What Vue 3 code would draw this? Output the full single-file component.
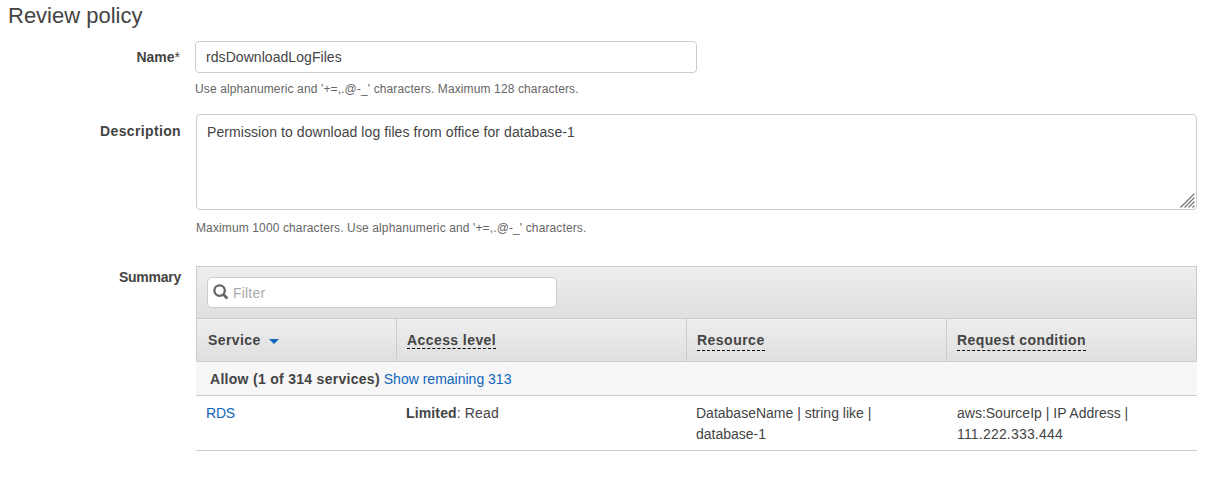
<script setup>
const columns = [
  { title: 'Service', sorted: true, cls: 'service' },
  { title: 'Access level', cls: 'hint access' },
  { title: 'Resource', cls: 'hint loose resource' },
  { title: 'Request condition', cls: 'hint loose condition' },
]
</script>

<template>
  <main class="page">
    <h1>Review policy</h1>

    <section class="field name-field">
      <label class="label">Name<span class="required">*</span></label>
      <div class="control">
        <div class="text-input">rdsDownloadLogFiles</div>
        <p class="help">Use alphanumeric and '+=,.@-_' characters. Maximum 128 characters.</p>
      </div>
    </section>

    <section class="field description-field">
      <label class="label">Description</label>
      <div class="control">
        <div class="textarea">
          Permission to download log files from office for database-1
          <svg class="grip" width="15" height="15" viewBox="0 0 15 15">
            <path d="M0.5 14.5L14.5 0.5M4.5 14.5L14.5 4.5M8.5 14.5L14.5 8.5M12.5 14.5L14.5 12.5" />
          </svg>
        </div>
        <p class="help">Maximum 1000 characters. Use alphanumeric and '+=,.@-_' characters.</p>
      </div>
    </section>

    <section class="field summary-field">
      <label class="label">Summary</label>
      <div class="control table">
        <div class="toolbar">
          <div class="filter">
            <svg width="16" height="16" viewBox="0 0 16 16">
              <circle cx="6.6" cy="6.6" r="5.2" />
              <path d="M10.4 10.4L14.4 14.4" />
            </svg>
            <span>Filter</span>
          </div>
        </div>
        <div class="row head">
          <div v-for="c in columns" :key="c.title" class="th">
            <span :class="c.cls">{{ c.title }}</span>
            <svg v-if="c.sorted" class="caret" width="10" height="5" viewBox="0 0 10 5"><path d="M0 0H10L5 5Z" /></svg>
          </div>
        </div>
        <div class="group"><b>Allow (1 of 314 services)</b> <a>Show remaining 313</a></div>
        <div class="row body">
          <div class="td"><a class="rds">RDS</a></div>
          <div class="td limited"><b>Limited</b>: Read</div>
          <div class="td">DatabaseName | string like |<br />database-1</div>
          <div class="td last">aws:SourceIp | IP Address |<br /><span class="ip">111.222.333.444</span></div>
        </div>
      </div>
    </section>
  </main>
</template>

<style>
body { background: #fff; }
</style>

<style scoped>
.page {
  box-sizing: border-box;
  width: 1225px;
  height: 480px;
  overflow: hidden;
  padding: 3px 28px 0 0;
  font: 14px/21px "Liberation Sans", Arial, sans-serif;
  color: #444;
}
h1 { margin: 0 0 0 8px; font-size: 22px; line-height: 26px; font-weight: 400; }
.field { display: flex; }
.label { width: 181px; flex: none; text-align: right; font-weight: 700; }
.required { font-weight: 400; }
.control { flex: 1; min-width: 0; margin-left: 15px; }
.name-field { margin-top: 12px; height: 73px; }
.name-field .label { width: 180px; padding-top: 6px; }
.text-input {
  box-sizing: border-box; width: 502px; height: 32px;
  border: 1px solid #ccc; border-radius: 4px; padding: 5px 10px;
  letter-spacing: 0.06px;
}
.help { margin: 0; padding-top: 8px; font-size: 12px; line-height: 16px; letter-spacing: 0.122px; color: #666; }
.description-field { height: 152px; }
.description-field .label { padding-top: 7px; letter-spacing: 0.36px; }
.textarea {
  box-sizing: border-box; position: relative; height: 96px;
  border: 1px solid #ccc; border-radius: 4px; padding: 7px 10px;
  letter-spacing: 0.08px;
}
.description-field .help { padding-top: 10px; }
.grip { position: absolute; right: 1px; bottom: 1px; stroke: #777; stroke-width: 1.3; fill: none; }
.summary-field .label { padding-top: 1px; letter-spacing: -0.25px; }
.toolbar {
  box-sizing: border-box; height: 52px; padding: 10px;
  border: 1px solid #ccc; border-bottom: 0;
  background: linear-gradient(#eee, #dfdfdf);
}
.filter {
  box-sizing: border-box; width: 350px; height: 31px; padding: 0 5px;
  display: flex; align-items: center; gap: 4px;
  border: 1px solid #ccc; border-radius: 5px; background: #fff; color: #aaa;
}
.filter span { padding-top: 1px; letter-spacing: 0.2px; }
.filter svg { fill: none; stroke: #666; stroke-width: 2.3; margin-top: -2px; }
.filter path { stroke-width: 2.8; }
.row { display: grid; grid-template-columns: 200px 290px 260px 1fr; }
.head {
  box-sizing: border-box; height: 44px; border: 1px solid #ccc;
  grid-template-columns: 199px 290px 260px 1fr;
  background: linear-gradient(#eee, #dfdfdf); font-weight: 700;
}
.th { padding: 11px 10px 0; border-left: 1px solid #ccc; }
.th:first-child { border-left: 0; padding-left: 11px; }
.service { letter-spacing: 0.4px; }
.hint { display: inline-block; height: 18px; line-height: 21px; border-bottom: 1px dashed #000; }
.hint.loose { height: 20px; }
.access { letter-spacing: 0.42px; }
.resource { letter-spacing: 0.48px; }
.condition { letter-spacing: 0.4px; }
.caret { margin-left: 8px; vertical-align: 1px; fill: #1166bb; }
.group { box-sizing: border-box; height: 34px; padding: 7px 14px; background: #f6f6f6; border-bottom: 1px solid #ccc; }
.group b { letter-spacing: 0.29px; }
a { color: #1166bb; }
.body { box-sizing: border-box; height: 55px; border-bottom: 1px solid #ccc; }
.td { padding: 7px 10px 0; }
.td.last { padding-left: 11px; }
.rds { letter-spacing: -0.2px; }
.limited { letter-spacing: 0.14px; }
.ip { letter-spacing: 0.19px; }
</style>
